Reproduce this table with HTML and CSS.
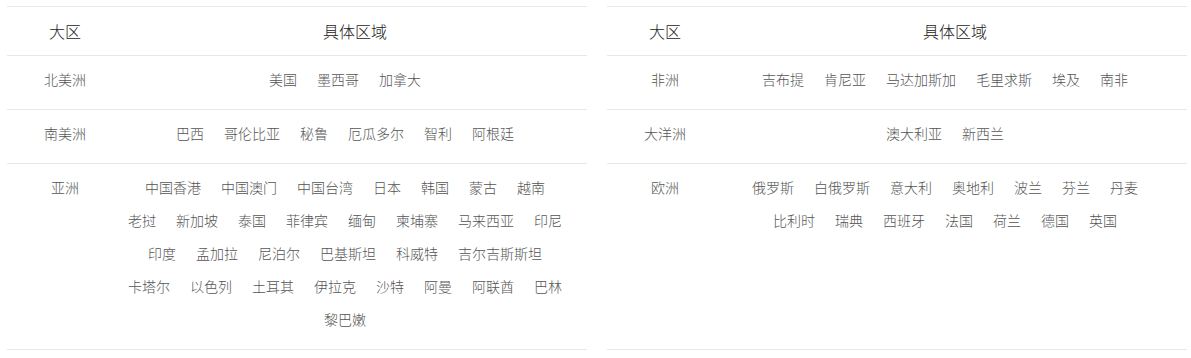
FILE: index.html
```html
<!DOCTYPE html>
<html lang="zh-CN">
<head>
<meta charset="utf-8">
<title>区域</title>
<link rel="stylesheet" href="styles.css">
</head>
<body>
<div class="wrap">
  <div class="tbl">
    <div class="row head"><div class="c1">大区</div><div class="c2">具体区域</div></div>
    <div class="row"><div class="c1"><span>北美洲</span></div><div class="c2"><span>美国</span><span>墨西哥</span><span>加拿大</span></div></div>
    <div class="row"><div class="c1"><span>南美洲</span></div><div class="c2"><span>巴西</span><span>哥伦比亚</span><span>秘鲁</span><span>厄瓜多尔</span><span>智利</span><span>阿根廷</span></div></div>
    <div class="row last"><div class="c1"><span>亚洲</span></div><div class="c2"><span>中国香港</span><span>中国澳门</span><span>中国台湾</span><span>日本</span><span>韩国</span><span>蒙古</span><span>越南</span><span>老挝</span><span>新加坡</span><span>泰国</span><span>菲律宾</span><span>缅甸</span><span>柬埔寨</span><span>马来西亚</span><span>印尼</span><span>印度</span><span>孟加拉</span><span>尼泊尔</span><span>巴基斯坦</span><span>科威特</span><span>吉尔吉斯斯坦</span><span>卡塔尔</span><span>以色列</span><span>土耳其</span><span>伊拉克</span><span>沙特</span><span>阿曼</span><span>阿联酋</span><span>巴林</span><span>黎巴嫩</span></div></div>
  </div>
  <div class="tbl">
    <div class="row head"><div class="c1">大区</div><div class="c2">具体区域</div></div>
    <div class="row"><div class="c1"><span>非洲</span></div><div class="c2"><span>吉布提</span><span>肯尼亚</span><span>马达加斯加</span><span>毛里求斯</span><span>埃及</span><span>南非</span></div></div>
    <div class="row"><div class="c1"><span>大洋洲</span></div><div class="c2"><span>澳大利亚</span><span>新西兰</span></div></div>
    <div class="row last"><div class="c1"><span>欧洲</span></div><div class="c2"><span>俄罗斯</span><span>白俄罗斯</span><span>意大利</span><span>奥地利</span><span>波兰</span><span>芬兰</span><span>丹麦</span><span>比利时</span><span>瑞典</span><span>西班牙</span><span>法国</span><span>荷兰</span><span>德国</span><span>英国</span></div></div>
  </div>
</div>
</body>
</html>
```

FILE: styles.css
```css
html, body {
  margin: 0;
  padding: 0;
  background: #fff;
}
body {
  font-family: "Microsoft YaHei", "Noto Sans CJK SC", "Noto Sans", sans-serif;
  font-weight: 300;
  color: #555;
}
.wrap {
  display: flex;
  align-items: stretch;
  gap: 20px;
  padding: 6px 4px 0 7px;
}
.tbl {
  flex: 1 1 0;
  min-width: 0;
  display: flex;
  flex-direction: column;
  border-top: 1px solid #e8e8e8;
}
.row {
  display: grid;
  grid-template-columns: 20% 1fr;
  border-bottom: 1px solid #e8e8e8;
  padding: 7px 0 13px;
}
.row.last {
  flex: 1 0 auto;
}
.row.head {
  padding: 0;
  height: 48px;
  align-items: center;
  font-size: 16px;
  color: #222;
  text-align: center;
}
.row:not(.head) .c1,
.row:not(.head) .c2 {
  font-size: 14px;
  line-height: 33px;
  text-align: center;
}
.row:not(.head) .c2 {
  padding: 0 3px;
}
.c2 span {
  display: inline-block;
  margin-right: 20px;
  white-space: nowrap;
}
```
